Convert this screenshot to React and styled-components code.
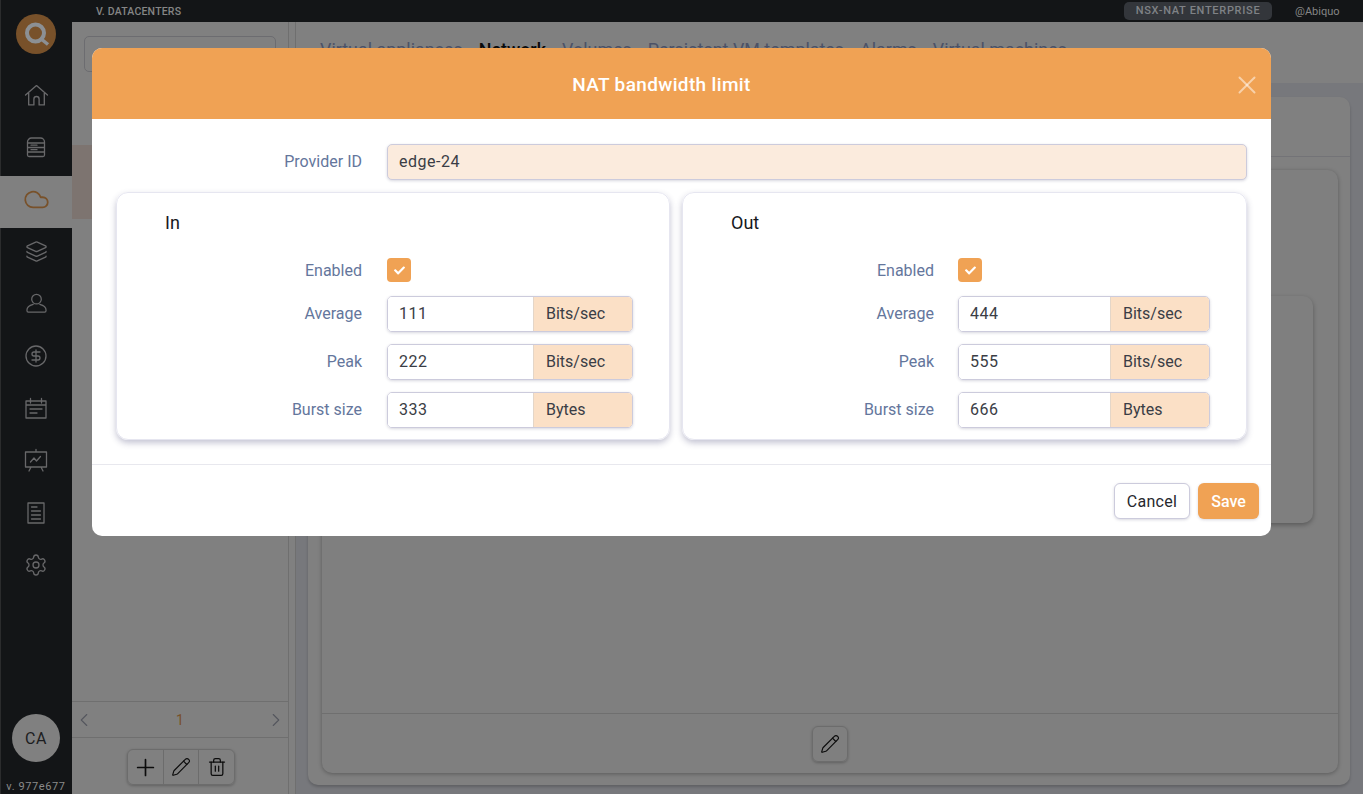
import React from "react";
import styled, { createGlobalStyle } from "styled-components";
import { ChevronLeft, ChevronRight, Cloud, CircleDollarSign, Layers, Pencil, Plus, Settings, Trash2, X } from "lucide-react";
import { FaCheck } from "react-icons/fa";

const HomeIcon = () => (
  <Glyph viewBox="0 0 24 24" width="25" height="25">
    <path d="M1.500 11.500 12 2.500l10.500 9M4.500 9.500V21h5v-5.500a2.500 2.500 0 0 1 5 0V21h5V9.500" />
  </Glyph>
);

const ServerIcon = () => (
  <Glyph viewBox="0 0 24 24" width="24" height="24">
    <path d="M3.500 7a4 4 0 0 1 4-4h9a4 4 0 0 1 4 4v13a1.500 1.500 0 0 1-1.500 1.500H5A1.500 1.500 0 0 1 3.500 20zM3.500 8h17M3.500 12.500h17M3.500 17h17M7 10.200h6M7 14.700h6" />
  </Glyph>
);

const UserIcon = () => (
  <Glyph viewBox="0 0 24 24" width="23" height="23">
    <circle cx="12" cy="7.500" r="5" />
    <path d="M8.500 13c-3.500 1-6.500 2.500-6.500 6 0 1 .5 2 1.500 2h17c1 0 1.500-1 1.500-2 0-3.500-3-5-6.500-6" />
  </Glyph>
);

const CalendarIcon = () => (
  <Glyph viewBox="0 0 24 24" width="24" height="24">
    <path d="M2 5h20v17H2zM2 9h20M6.500 2.500V7M17.500 2.500V7M6 13h12M6 17h7" />
  </Glyph>
);

const BoardIcon = () => (
  <Glyph viewBox="0 0 24 24" width="24" height="24">
    <path d="M1.500 4h21v15h-21zM12 1.500V4M7 19l-2 4M17 19l2 4M6.500 14l3.500-4 2.500 3 4-4.500" />
  </Glyph>
);

const DocIcon = () => (
  <Glyph viewBox="0 0 24 24" width="24" height="24">
    <path d="M4 2h16v20H4zM7.500 6H13M7.500 10h9M7.500 14h9M7.500 18h9" />
  </Glyph>
);

const navIcons = [
  { key: "home", icon: <HomeIcon /> },
  { key: "servers", icon: <ServerIcon /> },
  { key: "cloud", icon: <Cloud size={27} strokeWidth={1.6} />, active: true },
  { key: "layers", icon: <Layers size={23} strokeWidth={1.4} /> },
  { key: "user", icon: <UserIcon /> },
  { key: "pricing", icon: <CircleDollarSign size={24} strokeWidth={1.3} /> },
  { key: "events", icon: <CalendarIcon /> },
  { key: "reports", icon: <BoardIcon /> },
  { key: "docs", icon: <DocIcon /> },
  { key: "settings", icon: <Settings size={24} strokeWidth={1.3} /> },
];

const tabs = ["Virtual appliances", "Network", "Volumes", "Persistent VM templates", "Alarms", "Virtual machines"];

const inRows = [
  { label: "Average", value: "111", unit: "Bits/sec" },
  { label: "Peak", value: "222", unit: "Bits/sec" },
  { label: "Burst size", value: "333", unit: "Bytes" },
];

const outRows = [
  { label: "Average", value: "444", unit: "Bits/sec" },
  { label: "Peak", value: "555", unit: "Bits/sec" },
  { label: "Burst size", value: "666", unit: "Bytes" },
];

const LimitCard = ({ title, rows, side }) => (
  <Card>
    <CardTitle>{title}</CardTitle>
    <EnabledRow $side={side}>
      <EnabledLabel>Enabled</EnabledLabel>
      <CheckBox>
        <FaCheck size={11} />
      </CheckBox>
    </EnabledRow>
    {rows.map((e) => (
      <FieldRow $side={side} key={e.label}>
        <FieldLabel>{e.label}</FieldLabel>
        <InputGroup>
          <GroupInput readOnly value={e.value} />
          <Unit>{e.unit}</Unit>
        </InputGroup>
      </FieldRow>
    ))}
  </Card>
);

const App = () => {
  return (
    <Page>
      <GlobalStyle />
      <Sidebar>
        <Logo>
          <svg viewBox="0 0 40 40" width="40" height="40">
            <circle cx="20" cy="20" r="20" fill="#78512a" />
            <circle cx="19.500" cy="19" r="8.500" fill="none" stroke="#8c9094" strokeWidth="4" />
            <path d="M24 24l8 6.500" stroke="#8c9094" strokeWidth="3.500" />
          </svg>
        </Logo>
        <Nav>
          {navIcons.map((e) => (
            <NavItem key={e.key} $active={e.active}>
              {e.icon}
            </NavItem>
          ))}
        </Nav>
        <Avatar>CA</Avatar>
        <Version>v. 977e677</Version>
      </Sidebar>

      <Main>
        <TopBar>
          <TopTitle>V. DATACENTERS</TopTitle>
          <LicenseBadge>NSX-NAT ENTERPRISE</LicenseBadge>
          <TopUser>@Abiquo</TopUser>
        </TopBar>
        <Content>
          <LeftPanel>
            <SearchBox />
            <SelectedRow />
            <Pagination>
              <ChevronLeft size={22} strokeWidth={1.2} />
              <PageNumber>1</PageNumber>
              <ChevronRight size={22} strokeWidth={1.2} />
            </Pagination>
            <ToolRow>
              <ToolGroup>
                <ToolButton>
                  <Plus size={27} strokeWidth={1.5} />
                </ToolButton>
                <ToolButton>
                  <Pencil size={20} strokeWidth={1.4} />
                </ToolButton>
                <ToolButton>
                  <Trash2 size={20} strokeWidth={1.5} />
                </ToolButton>
              </ToolGroup>
            </ToolRow>
          </LeftPanel>
          <RightPanel>
            <Tabs>
              {tabs.map((t) => (
                <Tab key={t} $active={t === "Network"}>
                  {t}
                </Tab>
              ))}
            </Tabs>
            <Body>
              <OuterCard>
                <OuterHead />
                <InnerCard>
                  <InnerContent>
                    <NestedCard />
                  </InnerContent>
                  <InnerFooter>
                    <ToolSingle>
                      <Pencil size={20} strokeWidth={1.4} />
                    </ToolSingle>
                  </InnerFooter>
                </InnerCard>
              </OuterCard>
            </Body>
          </RightPanel>
        </Content>
      </Main>

      <Backdrop>
        <Modal>
          <ModalHeader>
            NAT bandwidth limit
            <CloseButton>
              <X size={30} strokeWidth={1.6} />
            </CloseButton>
          </ModalHeader>
          <ModalBody>
            <ProviderRow>
              <FieldLabel>Provider ID</FieldLabel>
              <ProviderInput readOnly value="edge-24" />
            </ProviderRow>
            <CardsGrid>
              <LimitCard title="In" rows={inRows} side="in" />
              <LimitCard title="Out" rows={outRows} side="out" />
            </CardsGrid>
          </ModalBody>
          <ModalFooter>
            <CancelButton>Cancel</CancelButton>
            <SaveButton>Save</SaveButton>
          </ModalFooter>
        </Modal>
      </Backdrop>
    </Page>
  );
};

export default App;

const GlobalStyle = createGlobalStyle`
  html, body {
    margin: 0;
    height: 100%;
    overflow: hidden;
    font-family: "Roboto", "Liberation Sans", sans-serif;
  }
  #root {
    height: 100%;
  }
  * {
    box-sizing: border-box;
  }
`;

const Page = styled.div`
  display: flex;
  height: 794px;
  background: #808080;
  position: relative;
  overflow: hidden;
`;

const Glyph = styled.svg`
  fill: none;
  stroke: currentColor;
  stroke-width: 1.3;
  stroke-linejoin: round;
  stroke-linecap: round;
`;

const Sidebar = styled.div`
  width: 72px;
  flex-shrink: 0;
  display: flex;
  flex-direction: column;
  align-items: center;
  background: #131517;
  box-shadow: inset 1px 0 0 #2b2c2d;
`;

const Logo = styled.div`
  height: 40px;
  margin-top: 14px;
  margin-bottom: 18px;
`;

const Nav = styled.div`
  width: 100%;
  flex: 1;
`;

const NavItem = styled.div`
  height: 52px;
  margin-bottom: 0.2px;
  padding-bottom: 6px;
  display: flex;
  align-items: center;
  justify-content: center;
  color: ${(p) => (p.$active ? "#78512a" : "#68686a")};
  background: ${(p) => (p.$active ? "#808080" : "transparent")};
`;

const Avatar = styled.div`
  width: 48px;
  height: 48px;
  border-radius: 50%;
  background: #808080;
  color: #1c1d20;
  font-size: 16px;
  letter-spacing: 0.5px;
  display: flex;
  align-items: center;
  justify-content: center;
`;

const Version = styled.div`
  margin-top: 18px;
  height: 14px;
  font-size: 11px;
  line-height: 14px;
  letter-spacing: 0.6px;
  color: #8a8a8a;
  white-space: nowrap;
`;

const Main = styled.div`
  flex: 1;
  min-width: 0;
  display: flex;
  flex-direction: column;
`;

const TopBar = styled.div`
  height: 22px;
  flex-shrink: 0;
  display: flex;
  align-items: center;
  padding-left: 24px;
  background: #131517;
  font-size: 10.5px;
  color: #858585;
`;

const TopTitle = styled.div`
  flex: 1;
  font-weight: 500;
  letter-spacing: 0.2px;
`;

const LicenseBadge = styled.div`
  width: 148px;
  height: 18px;
  border-radius: 5px;
  background: #33363b;
  color: #7f8286;
  text-align: center;
  font-size: 11px;
  font-weight: 500;
  line-height: 18px;
  letter-spacing: 0.7px;
`;

const TopUser = styled.div`
  width: 91px;
  padding-left: 23px;
  font-size: 11px;
`;

const Content = styled.div`
  flex: 1;
  min-height: 0;
  display: flex;
`;

const LeftPanel = styled.div`
  width: 217px;
  flex-shrink: 0;
  display: flex;
  flex-direction: column;
  border-right: 1px solid #6f6f6f;
`;

const SearchBox = styled.div`
  height: 36px;
  margin: 14px 12px 0;
  border: 1px solid #6c6c70;
  border-radius: 5px;
`;

const SelectedRow = styled.div`
  height: 74px;
  margin-top: 73px;
  background: #7d7470;
`;

const Pagination = styled.div`
  margin-top: auto;
  height: 37px;
  padding: 0 1px;
  display: flex;
  align-items: center;
  justify-content: space-between;
  border-top: 1px solid #6f6f6f;
  border-bottom: 1px solid #6f6f6f;
  color: #54565e;
`;

const PageNumber = styled.div`
  color: #78512a;
  font-size: 14px;
`;

const ToolRow = styled.div`
  height: 56px;
  display: flex;
  justify-content: center;
  padding: 11px 0 0 2px;
`;

const ToolGroup = styled.div`
  width: 108px;
  height: 36px;
  display: flex;
  border: 1px solid #6c6c6c;
  border-radius: 6px;
  box-shadow: 0 1px 3px rgba(0, 0, 0, 0.25);
`;

const ToolButton = styled.div`
  flex: 1;
  display: flex;
  align-items: center;
  justify-content: center;
  color: #0c0c0c;
  & + & {
    border-left: 1px solid #6c6c6c;
  }
`;

const RightPanel = styled.div`
  flex: 1;
  min-width: 0;
  display: flex;
  flex-direction: column;
  margin-left: 6px;
  border-left: 1px solid #6f6f6f;
`;

const Tabs = styled.div`
  height: 61px;
  flex-shrink: 0;
  display: flex;
  gap: 16px;
  padding: 18px 0 0 24px;
  font-size: 17.9px;
  line-height: 20px;
`;

const Tab = styled.div`
  white-space: nowrap;
  color: ${(p) => (p.$active ? "#0a0a0a" : "#4c5266")};
  font-weight: ${(p) => (p.$active ? 500 : 400)};
`;

const Body = styled.div`
  flex: 1;
  min-height: 0;
  background: #77787c;
  padding: 14px 13px 9px 12px;
`;

const OuterCard = styled.div`
  height: 100%;
  display: flex;
  flex-direction: column;
  background: #808080;
  border-radius: 10px;
  box-shadow: 0 2px 3px rgba(0, 0, 0, 0.2);
`;

const OuterHead = styled.div`
  height: 60px;
  flex-shrink: 0;
  border-bottom: 1px solid #737377;
`;

const InnerCard = styled.div`
  flex: 1;
  min-height: 0;
  display: flex;
  flex-direction: column;
  margin: 13px 12px 12px 14px;
  background: #7f7f7f;
  border-radius: 10px;
  box-shadow: 0 1px 4px rgba(0, 0, 0, 0.3);
`;

const InnerContent = styled.div`
  flex: 1;
  min-height: 0;
  padding: 126px 25px 0 60px;
`;

const NestedCard = styled.div`
  height: 227px;
  border-radius: 10px;
  box-shadow: 0 2px 5px rgba(0, 0, 0, 0.3);
`;

const InnerFooter = styled.div`
  height: 60px;
  flex-shrink: 0;
  display: flex;
  align-items: center;
  justify-content: center;
  border-top: 1px solid #6f6f6f;
`;

const ToolSingle = styled.div`
  width: 36px;
  height: 36px;
  display: flex;
  align-items: center;
  justify-content: center;
  border: 1px solid #6c6c6c;
  border-radius: 6px;
  color: #0c0c0c;
  box-shadow: 0 1px 3px rgba(0, 0, 0, 0.25);
`;

const Backdrop = styled.div`
  position: absolute;
  inset: 0;
  padding: 48px 92px;
`;

const Modal = styled.div`
  background: #ffffff;
  border-radius: 10px;
  overflow: hidden;
`;

const ModalHeader = styled.div`
  height: 71px;
  position: relative;
  display: flex;
  align-items: center;
  justify-content: center;
  padding: 2px 40px 0 0;
  background: #f0a254;
  color: #ffffff;
  font-size: 19px;
  font-weight: 500;
  letter-spacing: 0.35px;
`;

const CloseButton = styled.div`
  position: absolute;
  right: 9px;
  top: 22px;
  display: flex;
  color: rgba(255, 255, 255, 0.5);
`;

const ModalBody = styled.div`
  padding: 25px 24px 24px;
  border-bottom: 1px solid #e8e8ee;
`;

const FieldLabel = styled.div`
  padding-bottom: 2px;
  text-align: right;
  font-size: 16px;
  color: #64769c;
`;

const EnabledLabel = styled(FieldLabel)`
  padding-bottom: 0;
`;

const fieldBorder = `
  border: 1px solid #cccbdc;
  box-shadow: 0 1px 3px rgba(60, 60, 100, 0.2);
`;

const ProviderRow = styled.div`
  display: grid;
  grid-template-columns: 246px 1fr;
  column-gap: 25px;
  align-items: center;
  margin-bottom: 12px;
`;

const ProviderInput = styled.input`
  height: 36px;
  width: 100%;
  padding: 0 11px 2px;
  border-radius: 5px;
  outline: none;
  ${fieldBorder}
  background: #fbebdd;
  font: inherit;
  font-size: 16px;
  letter-spacing: 0.5px;
  color: #3a3d45;
`;

const CardsGrid = styled.div`
  display: grid;
  grid-template-columns: 554px 565px;
  column-gap: 12px;
`;

const Card = styled.div`
  height: 248px;
  padding-top: 18px;
  border: 1px solid #e6e6f0;
  border-radius: 12px;
  box-shadow: 0 3px 6px rgba(60, 60, 110, 0.3);
`;

const CardTitle = styled.div`
  height: 24px;
  margin-bottom: 23px;
  padding-left: 48px;
  font-size: 18px;
  line-height: 24px;
  color: #17181c;
`;

const rowColumns = (p) => (p.$side === "in" ? "245px 246px" : "251px 252px");
const rowGap = (p) => (p.$side === "in" ? "25px" : "24px");

const EnabledRow = styled.div`
  display: grid;
  grid-template-columns: ${rowColumns};
  column-gap: ${rowGap};
  align-items: center;
  height: 24px;
  margin-bottom: 14px;
`;

const FieldRow = styled.div`
  display: grid;
  grid-template-columns: ${rowColumns};
  column-gap: ${rowGap};
  align-items: center;
  height: 36px;
  & + & {
    margin-top: 12px;
  }
`;

const CheckBox = styled.div`
  width: 24px;
  height: 24px;
  display: flex;
  align-items: center;
  justify-content: center;
  border-radius: 4px;
  background: #f0a254;
  color: #ffffff;
`;

const InputGroup = styled.div`
  display: flex;
  height: 36px;
  border-radius: 5px;
  overflow: hidden;
  ${fieldBorder}
`;

const GroupInput = styled.input`
  flex: 1;
  min-width: 0;
  padding: 0 11px 2px;
  border: none;
  outline: none;
  background: #ffffff;
  font: inherit;
  font-size: 16px;
  letter-spacing: 0.5px;
  color: #3a3d45;
`;

const Unit = styled.div`
  width: 99px;
  flex-shrink: 0;
  padding: 0 0 2px 12px;
  display: flex;
  align-items: center;
  background: #fbe0c6;
  border-left: 1px solid #e4d6c8;
  font-size: 16px;
  color: #3a3d45;
`;

const ModalFooter = styled.div`
  height: 71px;
  display: flex;
  justify-content: flex-end;
  gap: 8px;
  padding: 18px 12px 0;
`;

const CancelButton = styled.div`
  width: 76px;
  height: 36px;
  display: flex;
  align-items: center;
  justify-content: center;
  border-radius: 6px;
  ${fieldBorder}
  background: #ffffff;
  font-size: 16px;
  letter-spacing: 0.3px;
  color: #26282e;
`;

const SaveButton = styled.div`
  width: 61px;
  height: 36px;
  display: flex;
  align-items: center;
  justify-content: center;
  border-radius: 6px;
  background: #f0a254;
  box-shadow: 0 1px 3px rgba(60, 60, 100, 0.2);
  font-size: 16px;
  font-weight: 500;
  color: #ffffff;
`;
